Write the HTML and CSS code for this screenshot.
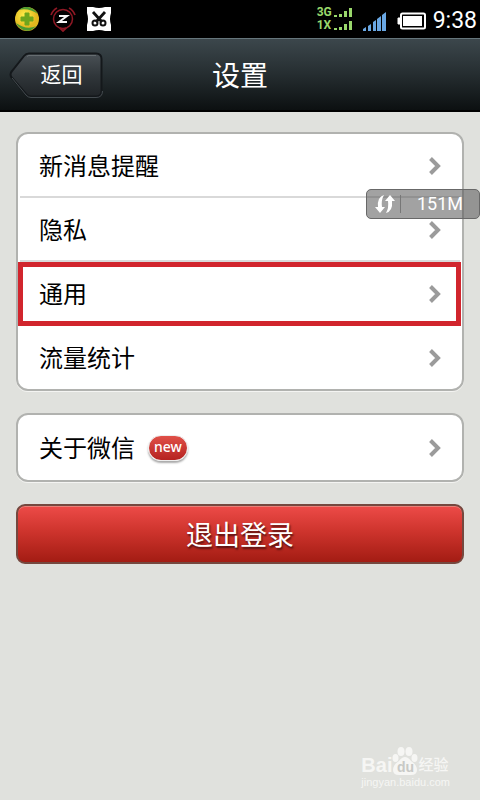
FILE: index.html
```html
<!DOCTYPE html>
<html lang="zh-CN">
<head>
<meta charset="utf-8">
<meta name="viewport" content="width=device-width, initial-scale=1">
<title>设置</title>
<link rel="stylesheet" href="styles.css">
</head>
<body>
<div class="statusbar">
  <div class="status-group notices">
    <svg width="26" height="26" viewBox="0 0 26 26" aria-hidden="true">
      <defs><radialGradient id="ball" cx=".4" cy=".35"><stop offset="0" stop-color="#fff04a"/><stop offset="1" stop-color="#e3b71e"/></radialGradient></defs>
      <circle cx="13" cy="13" r="12" fill="url(#ball)"/>
      <path d="M5 4C10-1 19 0 24 8C18 4 11 2 5 4ZM2 17C6 25 16 28 22 20C16 23 9 22 2 17Z" fill="#4b9a32"/>
      <path d="M11 7h4v4h4v4h-4v4h-4v-4H7v-4h4z" fill="#6ea51c" stroke="#6ea51c" stroke-linejoin="round"/>
    </svg>
    <svg width="26" height="26" viewBox="0 0 26 26" fill="none" aria-hidden="true">
      <circle cx="13" cy="13" r="9.500" stroke="#8e1824" stroke-width="1.5"/>
      <path d="M1 9Q3 4 7 2M25 9Q23 4 19 2M10 22l3 3 3-3" stroke="#8e1824" stroke-width="1.8"/>
      <path d="M9 10h8l-8 6h8" stroke="#f4f4f4" stroke-width="2"/>
    </svg>
    <svg width="26" height="26" viewBox="0 0 26 26" aria-hidden="true">
      <path d="M1 1h6q6 2 12 0h6v6q-2 6 0 12v6h-6q-6-2-12 0H1v-6q2-6 0-12z" fill="#fff"/>
      <path d="M7 6l9 10M19 6l-9 10" stroke="#111" stroke-width="2.8"/>
      <circle cx="9" cy="17" r="2.500" fill="none" stroke="#111" stroke-width="2"/>
      <circle cx="17" cy="17" r="2.500" fill="none" stroke="#111" stroke-width="2"/>
    </svg>
  </div>
  <div class="status-group">
    <div class="networks">
      <div class="network"><span>3G</span><svg width="19" height="9" viewBox="0 0 19 9" aria-hidden="true"><path d="M0 7h3v2H0zM5 6h3v3H5zM10 3h3v6h-3zM15 0h3v9h-3z" fill="#9ad86c"/></svg></div>
      <div class="network"><span>1X</span><svg width="19" height="9" viewBox="0 0 19 9" aria-hidden="true"><path d="M0 7h3v2H0zM5 6h3v3H5zM10 3h3v6h-3zM15 0h3v9h-3z" fill="#9ad86c"/></svg></div>
    </div>
    <svg class="signal" width="24" height="19" viewBox="0 0 24 19" aria-hidden="true"><path d="M0 19v-2l3-2v4zM5 19v-5l3-2v7zM10 19v-9l3-2v11zM14 19V7l4-3v15zM19 19V3l4-3v19z" fill="#69a7e3"/></svg>
    <svg class="battery" width="29" height="18" viewBox="0 0 29 18" aria-hidden="true"><path d="M3 6H1v6h2" fill="#fff" stroke="#fff"/><rect x="4" y="1.500" width="24" height="15" rx="1.500" fill="none" stroke="#fff" stroke-width="2"/><rect x="6" y="4" width="19" height="10" fill="#fff"/></svg>
    <time class="clock">9:38</time>
  </div>
</div>
<header class="header">
  <button class="back" type="button">
    <svg class="back-shape" viewBox="0 0 94 46" aria-hidden="true">
      <defs><linearGradient id="plate" x2="0" y2="1"><stop offset="0" stop-color="#4a5156"/><stop offset=".5" stop-color="#31373b"/><stop offset="1" stop-color="#202427"/></linearGradient></defs>
      <path d="M20 1.500H87Q92.500 1.500 92.500 7V39Q92.500 44.500 87 44.500H22Q19 44.500 17 42L3 26Q0 22.500 3 19L15 4Q17 1.500 20 1.500Z" fill="url(#plate)" stroke="#14181b" stroke-width="2"/>
      <path d="M3 26L17 43Q19 45.500 22 45.500H87Q93.500 45.500 93.500 39" fill="none" stroke="#454c50"/>
      <path d="M18 4.500Q19 3.500 20 3.500H87" fill="none" stroke="#666d71"/>
    </svg>
    <span class="back-label">返回</span>
  </button>
  <h1 class="title">设置</h1>
</header>
<main class="content">
  <div class="card-wrap">
    <nav class="card">
      <a class="row" href="#notice"><span class="label">新消息提醒</span><svg class="chevron" viewBox="0 0 12 18" aria-hidden="true"><path d="M1.500 1.500L9 9L1.500 16.500"/></svg></a>
      <a class="row" href="#privacy"><span class="label">隐私</span><svg class="chevron" viewBox="0 0 12 18" aria-hidden="true"><path d="M1.500 1.500L9 9L1.500 16.500"/></svg></a>
      <a class="row marked" href="#general"><span class="label">通用</span><svg class="chevron" viewBox="0 0 12 18" aria-hidden="true"><path d="M1.500 1.500L9 9L1.500 16.500"/></svg></a>
      <a class="row" href="#traffic"><span class="label">流量统计</span><svg class="chevron" viewBox="0 0 12 18" aria-hidden="true"><path d="M1.500 1.500L9 9L1.500 16.500"/></svg></a>
    </nav>
    <div class="meter">
      <svg width="20" height="20" viewBox="0 0 20 20" aria-hidden="true"><path d="M9 1Q2 3 3 13H0l5 6 5-6H7Q6 6 9 1ZM11 19Q18 17 17 7h3l-5-6-5 6h3Q14 14 11 19Z" fill="#fff"/></svg>
      <span class="meter-value">151M</span>
    </div>
  </div>
  <nav class="card">
    <a class="row single" href="#about"><span class="label">关于微信</span><span class="badge">new</span><svg class="chevron" viewBox="0 0 12 18" aria-hidden="true"><path d="M1.500 1.500L9 9L1.500 16.500"/></svg></a>
  </nav>
  <button class="logout" type="button">退出登录</button>
</main>
<footer class="watermark">
  <div class="brand">
    <span>Bai</span>
    <span class="paw">
      <svg width="26" height="28" viewBox="0 0 26 28" aria-hidden="true"><g fill="#f6f6f4"><ellipse cx="3.500" cy="11" rx="3" ry="4"/><ellipse cx="9" cy="4.500" rx="3.500" ry="4.500"/><ellipse cx="17" cy="4.500" rx="3.500" ry="4.500"/><ellipse cx="22.500" cy="11" rx="3" ry="4"/><path d="M13 10Q16 10 19 14Q25 18 25 23Q25 28 19 28H7Q1 28 1 23Q1 18 7 14Q10 10 13 10Z"/></g></svg>
      <span class="du">du</span>
    </span>
    <span class="brand-cn">经验</span>
  </div>
  <div class="site">jingyan.baidu.com</div>
</footer>
</body>
</html>
```
FILE: styles.css
```css
* { box-sizing: border-box; }
body {
  margin: 0;
  min-height: 100vh;
  position: relative;
  background: #e0e1dd;
  color: #000;
  font-family: Roboto, "Noto Sans CJK SC", sans-serif;
}
button { font-family: inherit; border: 0; padding: 0; cursor: pointer; }
a { color: inherit; text-decoration: none; }
.statusbar {
  display: flex;
  justify-content: space-between;
  align-items: center;
  height: 38px;
  padding: 0 3px 0 14px;
  background: #000;
}
.status-group { display: flex; align-items: center; }
.notices { gap: 10px; }
.networks { display: grid; gap: 4px; margin-right: 10px; }
.network {
  display: flex;
  align-items: flex-end;
  height: 9px;
  color: #9ad86c;
  font-size: 12px;
  font-weight: 700;
  line-height: 9px;
}
.network span { width: 17px; }
.signal { margin: 4px 10px 0 0; }
.battery { margin: 4px 7px 0 0; }
.clock { color: #fff; font-size: 23px; line-height: 38px; padding-top: 4px; }
.header {
  display: grid;
  grid-template-columns: 1fr auto 1fr;
  align-items: center;
  height: 74px;
  padding: 0 9px;
  background: linear-gradient(#3c474c, #252d30 50%, #0c1011);
  border-top: 1px solid #66767c;
  border-bottom: 2px solid #000;
}
.back {
  position: relative;
  width: 94px;
  height: 46px;
  background: none;
  color: #fff;
  font-size: 21px;
  line-height: 46px;
}
.back-shape { position: absolute; inset: 0; width: 100%; height: 100%; }
.back-label { position: relative; padding-left: 11px; }
.title { margin: 0; padding-top: 4px; color: #fff; font-size: 28px; font-weight: 400; line-height: 40px; }
.content { display: grid; gap: 22px; padding: 20px 16px; }
.card-wrap { position: relative; }
.card {
  background: #fff;
  border: 2px solid #b1b2af;
  border-radius: 12px;
  box-shadow: 0 1px #f4f4f2;
}
.row {
  display: flex;
  align-items: center;
  height: 64px;
  padding: 0 21px;
  font-size: 24px;
  line-height: 32px;
  background: linear-gradient(#d9d9d9, #d9d9d9) 2px 100% / calc(100% - 4px) 2px no-repeat;
}
.row:last-child { background: none; }
.label { padding-top: 2px; }
.row.single { height: 65px; }
.row.marked {
  margin-right: 1px;
  padding: 0 15px 0 16px;
  border: 5px solid #d1252d;
  background: #fff;
}
.row.marked + .row { height: 63px; }
.chevron {
  width: 12px;
  height: 18px;
  margin-left: auto;
  fill: none;
  stroke: #9b9b9b;
  stroke-width: 4;
}
.meter {
  position: absolute;
  top: 57px;
  right: -16px;
  display: flex;
  align-items: center;
  width: 114px;
  height: 30px;
  padding-left: 8px;
  border: 1px solid #686868;
  border-radius: 5px;
  background: rgba(85, 85, 85, .55);
  color: #fff;
  font-size: 18px;
  line-height: 28px;
}
.meter-value { margin-left: 5px; padding-left: 16px; border-left: 1px solid #777; line-height: 18px; }
.badge {
  margin-left: 13px;
  width: 40px;
  height: 26px;
  border: 1px solid #eee;
  border-radius: 13px;
  background: linear-gradient(#e05048, #b52220);
  box-shadow: 0 2px 2px #aaa;
  color: #fff;
  font-family: "Noto Sans", sans-serif;
  font-size: 14px;
  font-weight: 500;
  line-height: 22px;
  text-align: center;
}
.logout {
  height: 60px;
  padding-top: 4px;
  border: 2px solid #75483f;
  border-radius: 9px;
  background: linear-gradient(#ed4b48, #ce342d 45%, #a31c13);
  box-shadow: inset 0 1px #e88078;
  color: #fff;
  font-size: 27px;
  line-height: 50px;
  text-shadow: 1px 2px 2px #501010;
}
.watermark {
  position: absolute;
  right: 30px;
  bottom: 11px;
  color: #f6f6f4;
  font-family: "Liberation Sans", "Noto Sans CJK SC", sans-serif;
}
.brand { display: flex; align-items: flex-end; font-size: 20px; font-weight: 700; line-height: 20px; }
.paw { position: relative; height: 28px; }
.du { position: absolute; inset: 12px 0 0; color: #c8c9c6; font-size: 14px; line-height: 16px; text-align: center; }
.brand-cn { font-size: 15px; font-weight: 500; }
.site { font-size: 11px; line-height: 14px; }
```
